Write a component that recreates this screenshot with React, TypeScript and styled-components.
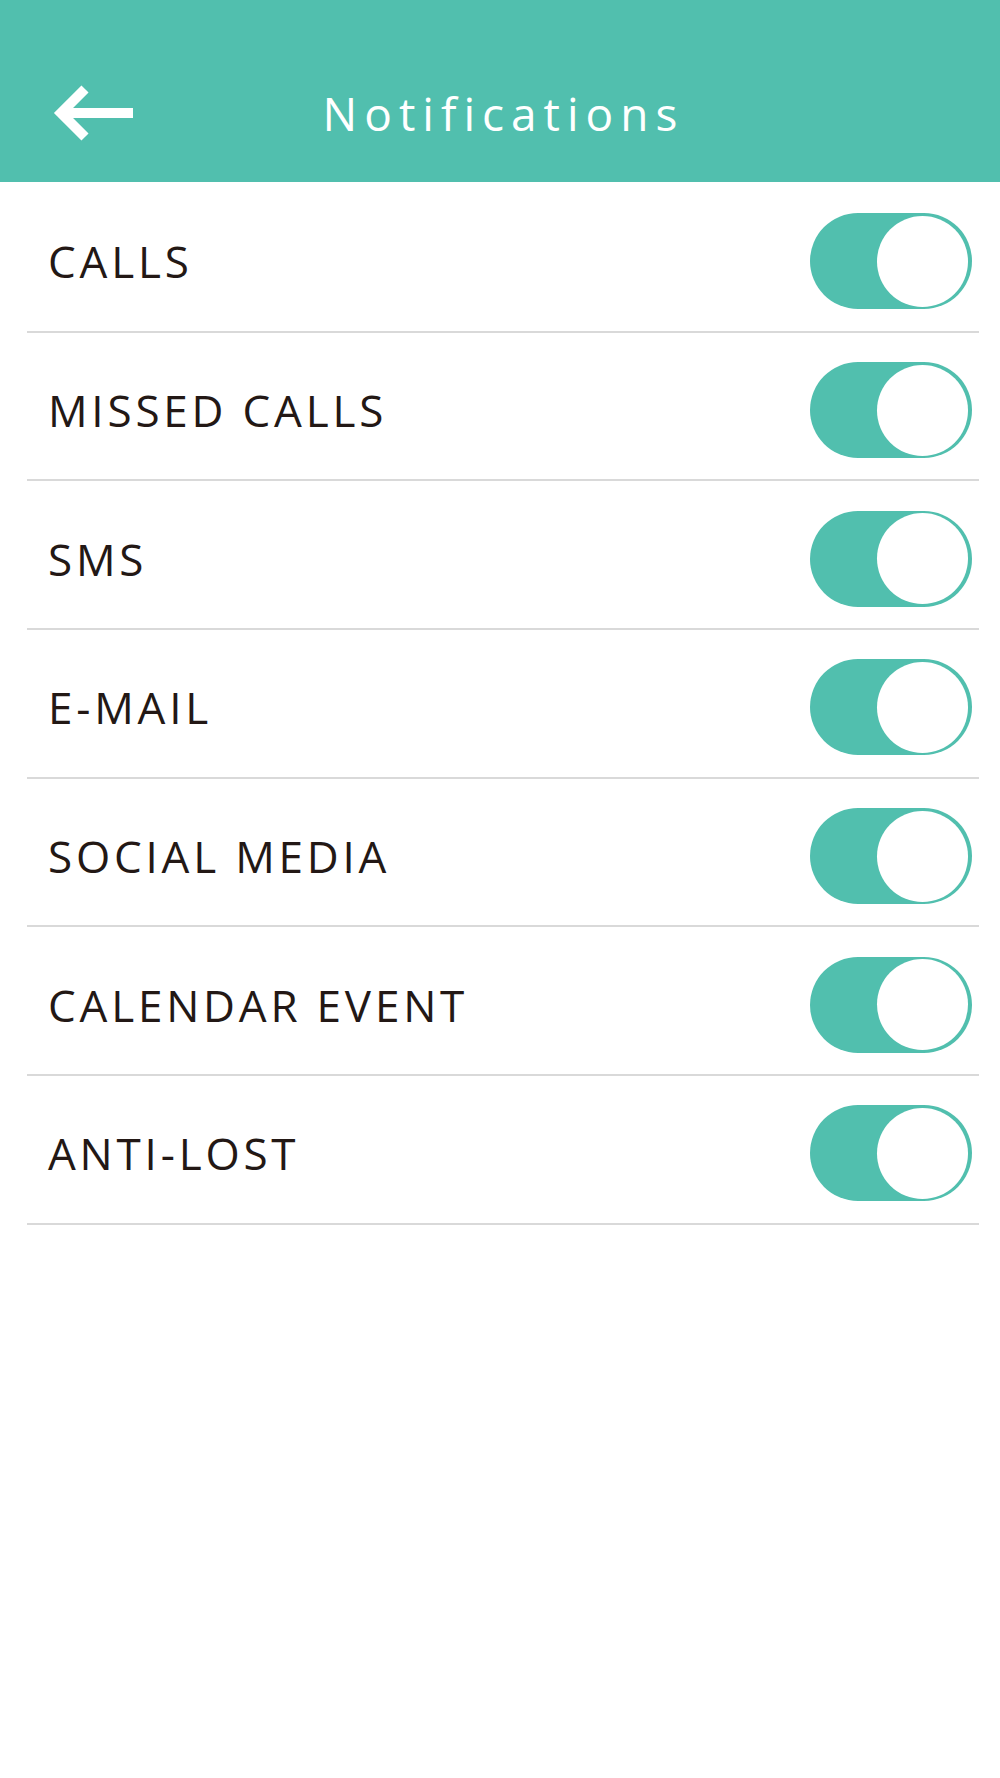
import React, { useState } from 'react';
import styled, { createGlobalStyle } from 'styled-components';

const TEAL = '#51bfae';

const GlobalStyle = createGlobalStyle`
  html, body {
    margin: 0;
    padding: 0;
    background: #ffffff;
  }
  body {
    font-family: 'Open Sans', 'Noto Sans', 'Liberation Sans', sans-serif;
  }
`;

const Page = styled.div`
  width: 1000px;
  min-height: 1778px;
  background: #ffffff;
`;

const Header = styled.header`
  height: 182px;
  box-sizing: border-box;
  padding-top: 44px;
  background: ${TEAL};
  display: grid;
  grid-template-columns: 1fr auto 1fr;
  align-items: center;
`;

const BackButton = styled.button`
  justify-self: start;
  margin-left: 51px;
  padding: 0;
  border: none;
  background: none;
  display: flex;
  cursor: pointer;
`;

const Title = styled.h1`
  margin: 0;
  color: #ffffff;
  font-size: 46px;
  font-weight: 400;
  letter-spacing: 7px;
  line-height: 1;
  padding-left: 7px;
`;

const List = styled.ul`
  list-style: none;
  margin: 2px 21px 0 27px;
  padding: 0;
`;

const Row = styled.li`
  height: 148.7px;
  box-sizing: border-box;
  padding: 8px 7px 0 21px;
  border-bottom: 2px solid #d9d9d9;
  display: flex;
  align-items: center;
  justify-content: space-between;
`;

const Label = styled.span`
  color: #231815;
  font-size: 44px;
  font-weight: 400;
  letter-spacing: 3.8px;
  line-height: 1;
`;

const Track = styled.button<{ $on: boolean }>`
  position: relative;
  width: 162px;
  height: 96px;
  padding: 0;
  border: none;
  border-radius: 48px;
  background: ${({ $on }) => ($on ? TEAL : '#d9d9d9')};
  cursor: pointer;
`;

const Knob = styled.span<{ $on: boolean }>`
  position: absolute;
  top: 2.5px;
  left: ${({ $on }) => ($on ? '67px' : '4px')};
  width: 91px;
  height: 91px;
  border-radius: 50%;
  background: #ffffff;
  transition: left 0.2s;
`;

const items = [
  'CALLS',
  'MISSED CALLS',
  'SMS',
  'E-MAIL',
  'SOCIAL MEDIA',
  'CALENDAR EVENT',
  'ANTI-LOST',
];

const BackArrow = () => (
  <svg width="82" height="56" viewBox="0 0 82 56">
    <polyline
      points="34,4 10,28 34,52"
      fill="none"
      stroke="#ffffff"
      strokeWidth="10"
      strokeLinejoin="miter"
      strokeLinecap="butt"
    />
    <line x1="12" y1="28" x2="82" y2="28" stroke="#ffffff" strokeWidth="10" />
  </svg>
);

const App: React.FC = () => {
  const [state, setState] = useState<boolean[]>(items.map(() => true));

  const toggle = (i: number) =>
    setState((s) => s.map((v, j) => (j === i ? !v : v)));

  return (
    <Page>
      <GlobalStyle />
      <Header>
        <BackButton aria-label="Back">
          <BackArrow />
        </BackButton>
        <Title>Notifications</Title>
        <span />
      </Header>
      <List>
        {items.map((label, i) => (
          <Row key={label}>
            <Label>{label}</Label>
            <Track $on={state[i]} onClick={() => toggle(i)} aria-label={label}>
              <Knob $on={state[i]} />
            </Track>
          </Row>
        ))}
      </List>
    </Page>
  );
};

export default App;
